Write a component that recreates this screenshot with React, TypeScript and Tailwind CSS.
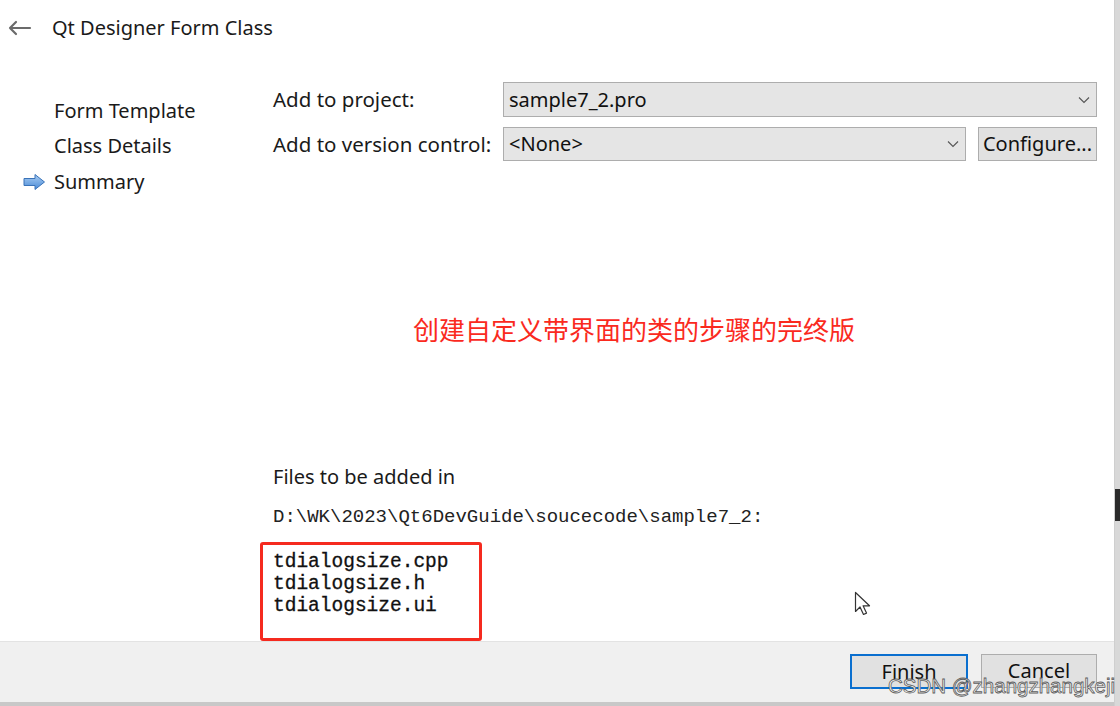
import React from 'react';

const ui = { fontFamily: '"Noto Sans", "Noto Sans CJK SC", sans-serif' };
const mono = { fontFamily: '"Liberation Mono", monospace' };

const BackArrow = () => (
  <svg width="24" height="16" viewBox="0 0 24 16" fill="none" stroke="#6b6b6b" strokeWidth="2.2" strokeLinecap="round">
    <path d="M2 8h20M2 8l6-6M2 8l6 6" />
  </svg>
);

const StepArrow = () => (
  <svg width="23" height="18" viewBox="0 0 23 18">
    <defs>
      <linearGradient id="ag" x1="0" y1="0" x2="0" y2="1">
        <stop offset="0" stopColor="#a9cdf3" />
        <stop offset="1" stopColor="#4a8ad6" />
      </linearGradient>
    </defs>
    <path d="M1 5.5h11V1.5l9.5 7.5-9.5 7.5v-4H1z" fill="url(#ag)" stroke="#3a73b8" strokeWidth="1" strokeLinejoin="round" />
  </svg>
);

const Chevron = () => (
  <svg width="12" height="8" viewBox="0 0 12 8" fill="none" stroke="#555" strokeWidth="1.1">
    <path d="M1 1.5l5 5 5-5" />
  </svg>
);

const Combo: React.FC<{ value: string; className?: string }> = ({ value, className }) => (
  <div className={`flex items-center justify-between bg-[#e5e5e5] border border-[#adadad] pl-[5px] pr-[6px] text-[20px] text-[#111] ${className ?? ''}`}>
    <span>{value}</span>
    <Chevron />
  </div>
);

const App: React.FC = () => {
  const files = ['tdialogsize.cpp', 'tdialogsize.h', 'tdialogsize.ui'];

  return (
    <div className="relative flex w-[1120px] h-[706px] bg-white overflow-hidden text-[#1a1a1a]" style={ui}>
      <div className="flex flex-col flex-1">
        <header className="flex items-center h-[56px] pl-[8px]">
          <BackArrow />
          <span className="ml-[20px] text-[20px]">Qt Designer Form Class</span>
        </header>

        <div className="flex flex-1">
          <nav className="w-[273px] pt-[37px] pl-[23px] text-[20px]">
            {['Form Template', 'Class Details', 'Summary'].map((s, i) => (
              <div key={s} className="flex items-center h-[35.5px]">
                <span className="w-[31px] flex items-center">{i === 2 && <StepArrow />}</span>
                <span>{s}</span>
              </div>
            ))}
          </nav>

          <main className="flex-1 flex flex-col pt-[26px] pr-[17px] text-[20px]">
            <div className="flex items-center h-[35px]">
              <span className="w-[230px] text-[20.5px]">Add to project:</span>
              <Combo value="sample7_2.pro" className="flex-1 h-[35px]" />
            </div>
            <div className="flex items-center h-[34px] mt-[10px]">
              <span className="w-[230px] text-[20.5px]">Add to version control:</span>
              <Combo value="<None>" className="w-[463px] h-[34px]" />
              <button className="ml-[12px] w-[119px] h-[34px] bg-[#e1e1e1] border border-[#adadad] text-[20px] text-[#111]">
                Configure...
              </button>
            </div>

            <p
              className="mt-[152px] ml-[140px] h-[32px] leading-[32px] text-[26px] text-[#fa2a1e]"
              style={{ fontFamily: '"Noto Sans CJK SC", sans-serif' }}
            >
              创建自定义带界面的类的步骤的完终版
            </p>

            <p className="mt-[119px] h-[26px] leading-[26px]">Files to be added in</p>
            <p className="mt-[15px] h-[24px] leading-[24px] text-[19px] text-[#222]" style={mono}>
              D:\WK\2023\Qt6DevGuide\soucecode\sample7_2:
            </p>

            <div className="mt-[13px] -ml-[13px] w-[222px] flex-1 border-[3px] border-[#f52a1f] rounded-[3px] pl-[10px] pt-[6px]">
              {files.map(f => (
                <div key={f} className="h-[22px] leading-[22px] text-[19.5px] text-[#111] [-webkit-text-stroke:0.3px_#111]" style={mono}>
                  {f}
                </div>
              ))}
            </div>
          </main>
        </div>

        <footer className="h-[65px] bg-[#f0f0f0] border-t border-[#e3e3e3] border-b-[4px] border-b-[#c8c8c8] flex justify-end items-start pt-[12px] pr-[17px] gap-[13px]">
          <button className="w-[118px] h-[35px] bg-[#e1e1e1] border-2 border-[#0a6fcf] text-[20px] text-[#111]">Finish</button>
          <button className="w-[116px] h-[34px] bg-[#e1e1e1] border border-[#adadad] text-[20px] text-[#111]">Cancel</button>
        </footer>
      </div>

      <div className="w-[6px] flex flex-col bg-[#d8d8d8] border-l border-[#cfcfcf]">
        <div className="h-[489px]" />
        <div className="h-[32px] bg-[#2b2b2b]" />
      </div>

      {/* mouse pointer from the recording */}
      <svg className="absolute left-[854px] top-[591px]" width="18" height="26" viewBox="0 0 18 26">
        <path d="M1.5 1.5v19l4.5-4.5 3.5 7.5 3-1.4-3.4-7.3h6.4z" fill="#fff" stroke="#333" strokeWidth="1.2" strokeLinejoin="round" />
      </svg>

      {/* watermark */}
      <span className="absolute left-[888px] top-[673px] text-[20.5px] text-[#f6f6f6] [-webkit-text-stroke:0.8px_#5e5e5e] leading-[26px]" style={{ fontFamily: '"Liberation Sans", sans-serif' }}>
        CSDN @zhangzhangkeji
      </span>
    </div>
  );
};

export default App;
